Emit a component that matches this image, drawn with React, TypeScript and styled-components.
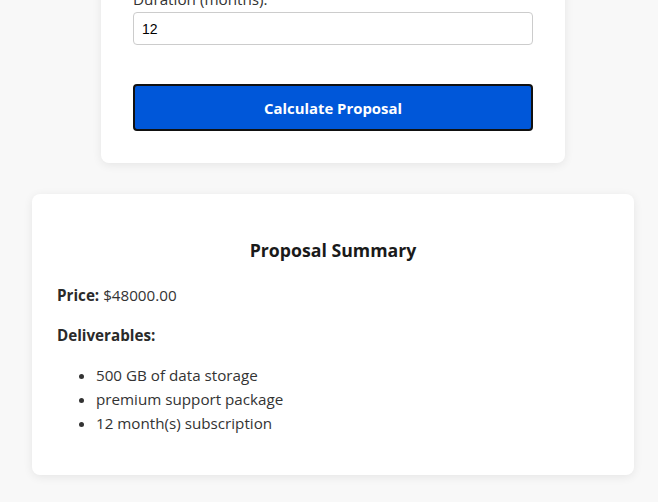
import React from "react";
import styled, { createGlobalStyle } from "styled-components";

const Global = createGlobalStyle`
  html, body { margin: 0; padding: 0; background: #f8f8f8; }
  body { font-family: "Open Sans", "Noto Sans", sans-serif; color: #222; overflow: hidden; }
`;

const Page = styled.main`
  display: flex;
  flex-direction: column;
  align-items: center;
  gap: 31px;
  margin-top: -45px;
  padding: 0 20px 32px 28px;
`;

const FormCard = styled.form`
  width: 464px;
  box-sizing: border-box;
  background: #fff;
  border-radius: 8px;
  box-shadow: 0 2px 10px rgba(0, 0, 0, 0.08);
  padding: 32px;
  display: flex;
  flex-direction: column;
`;

const Label = styled.label`
  font-size: 15.25px;
  line-height: 24px;
  color: #333;
  margin-bottom: 1px;
`;

const Input = styled.input`
  height: 33px;
  box-sizing: border-box;
  border: 1px solid #ccc;
  border-radius: 4px;
  padding: 0 8px;
  font-family: "Liberation Sans", Arial, sans-serif;
  font-size: 14px;
  color: #000;
  background: #fff;
`;

const Button = styled.button`
  margin-top: 39px;
  height: 47px;
  border: 2px solid #111;
  border-radius: 4px;
  background: #0057d9;
  color: #fff;
  font-family: "Open Sans", sans-serif;
  font-weight: 700;
  font-size: 14.9px;
  cursor: pointer;
`;

const Summary = styled.section`
  width: 602px;
  box-sizing: border-box;
  background: #fff;
  border-radius: 8px;
  box-shadow: 0 2px 10px rgba(0, 0, 0, 0.08);
  padding: 24px 25px;
`;

const Title = styled.h3`
  margin: 20px 0 21px;
  text-align: center;
  font-size: 17.7px;
  line-height: 24px;
  font-weight: 700;
  color: #1a1a1a;
`;

const Para = styled.p`
  margin: 0 0 16px;
  font-size: 15.2px;
  line-height: 24px;
  color: #333;
  strong { font-weight: 700; color: #2a2a2a; }
`;

const List = styled.ul`
  margin: 0 0 16px;
  padding-left: 39px;
  font-size: 15.2px;
  line-height: 24px;
  color: #333;
`;

export default function App() {
  return (
    <>
      <Global />
      <Page>
        <FormCard onSubmit={(e) => e.preventDefault()}>
          <Label htmlFor="duration">Duration (months):</Label>
          <Input id="duration" defaultValue="12" />
          <Button type="submit">Calculate Proposal</Button>
        </FormCard>
        <Summary>
          <Title>Proposal Summary</Title>
          <Para>
            <strong>Price:</strong> $48000.00
          </Para>
          <Para>
            <strong>Deliverables:</strong>
          </Para>
          <List>
            <li>500 GB of data storage</li>
            <li>premium support package</li>
            <li>12 month(s) subscription</li>
          </List>
        </Summary>
      </Page>
    </>
  );
}
